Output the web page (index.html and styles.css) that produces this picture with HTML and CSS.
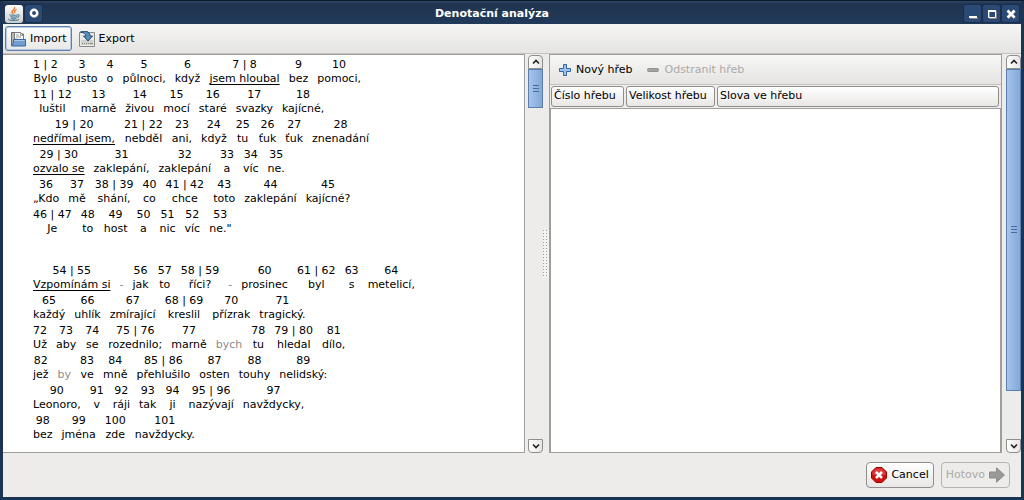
FILE: index.html
```html
<!DOCTYPE html>
<html lang="cs">
<head>
<meta charset="utf-8">
<title>Denotační analýza</title>
<link rel="stylesheet" href="styles.css">
</head>
<body>
<div class="window">
<header class="titlebar">
  <div class="title-group">
    <span class="java-icon"><svg width="18" height="18" viewBox="0 0 18 18"><path d="M9.500 2C11 4 7 5 7 7c0 1.200 1 1.500 1.500 2.500M11.500 4.500C9.500 5.500 9 6.500 10 8" fill="none" stroke="#e8762c" stroke-width="1.300"/><path d="M5 9.500c-2 1 7 1 7.500.2M5.500 11.500c1 .8 5 .8 6.500 0M6 13.200c1 .6 4 .6 5.500 0M12.500 10c2.500-.8 2 2-.5 2.500M4 14c-2 1.500 8 2 10 .3" fill="none" stroke="#5382a1" stroke-width="1.100"/></svg></span>
    <button class="win-btn" type="button" aria-label="Nabídka okna"><svg width="16" height="16" viewBox="0 0 16 16"><circle cx="8.500" cy="8.500" r="3.500" fill="none" stroke="#777" stroke-width="2"/><circle cx="8" cy="8" r="3.200" fill="none" stroke="#fff" stroke-width="2.400"/></svg></button>
  </div>
  <h1 class="title">Denotační analýza</h1>
  <div class="title-group end">
    <button class="win-btn" type="button" aria-label="Minimalizovat"><svg width="16" height="16" viewBox="0 0 16 16"><path d="M5 12.500h8" stroke="#888"/><path d="M4 11h8" stroke="#fff" stroke-width="2"/></svg></button>
    <button class="win-btn" type="button" aria-label="Maximalizovat"><svg width="16" height="16" viewBox="0 0 16 16"><path d="M5.500 5.500h7v7h-7z" fill="none" stroke="#888"/><path d="M4.500 5.500h7v6h-7z" fill="none" stroke="#fff"/><path d="M4 5h8" stroke="#fff" stroke-width="2"/></svg></button>
    <button class="win-btn" type="button" aria-label="Zavřít"><svg width="16" height="16" viewBox="0 0 16 16"><path d="M5 5l7 7M12 5l-7 7" stroke="#888" stroke-width="2.500"/><path d="M4.500 4.500l7 7M11.500 4.500l-7 7" stroke="#fff" stroke-width="2.500"/></svg></button>
  </div>
</header>
<div class="content">
<nav class="toolbar">
  <button class="tool active" type="button"><svg width="16" height="16" viewBox="0 0 16 16"><path d="M1.500 14.500v-13h5l1 1.500h6v10" fill="#b9bab6" stroke="#666861"/><path d="M4.500 8V1.500h6l3 3V9z" fill="#fff" stroke="#777973"/><path d="M10.500 1.500v3h3M6 4h3M6 6h5" fill="none" stroke="#999"/><path d="M3.500 8.500h12v6.500h-14l1.500-2z" fill="#729fcf" stroke="#3465a4"/><path d="M4.500 9.500h10" stroke="#a9c6e8"/></svg>Import</button>
  <button class="tool" type="button"><svg width="16" height="16" viewBox="0 0 16 16"><path d="M.5 1.500h15v14H.5z" fill="#e9e9e6" stroke="#888a85"/><path d="M2 9h12v5H2z" fill="#d0d1cd"/><path d="M3 12.500h1m1 0h1m1 0h1m1 0h1m1 0h3" stroke="#888a85"/><path d="M1.500 1C6-.5 11 0 11 5h2.500L9 10 4.500 5H7C7 3 5 1.500 1.500 1z" fill="#5b8fb8" stroke="#204a78"/></svg>Export</button>
</nav>
<main class="split">
  <section class="text-pane" aria-label="Text">
    <div class="stanza">
      <p class="row"><span class="w"><i>1 | 2</i>Bylo</span><span class="w"><i>3</i>pusto</span><span class="w"><i>4</i>o</span><span class="w"><i>5</i>půlnoci,</span><span class="w"><i>6</i>když</span><span class="w"><i>7 | 8</i><u>jsem hloubal</u></span><span class="w"><i>9</i>bez</span><span class="w"><i>10</i>pomoci,</span></p>
      <p class="row"><span class="w"><i>11 | 12</i>luštil</span><span class="w"><i>13</i>marně</span><span class="w"><i>14</i>živou</span><span class="w"><i>15</i>mocí</span><span class="w"><i>16</i>staré</span><span class="w"><i>17</i>svazky</span><span class="w"><i>18</i>kajícné,</span></p>
      <p class="row"><span class="w"><i>19 | 20</i><u>nedřímal jsem,</u></span><span class="w"><i>21 | 22</i>nebděl</span><span class="w"><i>23</i>ani,</span><span class="w"><i>24</i>když</span><span class="w"><i>25</i>tu</span><span class="w"><i>26</i>ťuk</span><span class="w"><i>27</i>ťuk</span><span class="w"><i>28</i>znenadání</span></p>
      <p class="row"><span class="w"><i>29 | 30</i><u>ozvalo se</u></span><span class="w"><i>31</i>zaklepání,</span><span class="w"><i>32</i>zaklepání</span><span class="w"><i>33</i>a</span><span class="w"><i>34</i>víc</span><span class="w"><i>35</i>ne.</span></p>
      <p class="row"><span class="w"><i>36</i>„Kdo</span><span class="w"><i>37</i>mě</span><span class="w"><i>38 | 39</i>shání,</span><span class="w"><i>40</i>co</span><span class="w"><i>41 | 42</i>chce</span><span class="w"><i>43</i>toto</span><span class="w"><i>44</i>zaklepání</span><span class="w"><i>45</i>kajícné?</span></p>
      <p class="row"><span class="w"><i>46 | 47</i>Je</span><span class="w"><i>48</i>to</span><span class="w"><i>49</i>host</span><span class="w"><i>50</i>a</span><span class="w"><i>51</i>nic</span><span class="w"><i>52</i>víc</span><span class="w"><i>53</i>ne."</span></p>
    </div>
    <div class="stanza">
      <p class="row"><span class="w"><i>54 | 55</i><u>Vzpomínám si</u></span><span class="w off">-</span><span class="w"><i>56</i>jak</span><span class="w"><i>57</i>to</span><span class="w"><i>58 | 59</i>říci?</span><span class="w off">-</span><span class="w"><i>60</i>prosinec</span><span class="w"><i>61 | 62</i>byl</span><span class="w"><i>63</i>s</span><span class="w"><i>64</i>metelicí,</span></p>
      <p class="row"><span class="w"><i>65</i>každý</span><span class="w"><i>66</i>uhlík</span><span class="w"><i>67</i>zmírající</span><span class="w"><i>68 | 69</i>kreslil</span><span class="w"><i>70</i>přízrak</span><span class="w"><i>71</i>tragický.</span></p>
      <p class="row"><span class="w"><i>72</i>Už</span><span class="w"><i>73</i>aby</span><span class="w"><i>74</i>se</span><span class="w"><i>75 | 76</i>rozednilo;</span><span class="w"><i>77</i>marně</span><span class="w off">bych</span><span class="w"><i>78</i>tu</span><span class="w"><i>79 | 80</i>hledal</span><span class="w"><i>81</i>dílo,</span></p>
      <p class="row"><span class="w"><i>82</i>jež</span><span class="w off">by</span><span class="w"><i>83</i>ve</span><span class="w"><i>84</i>mně</span><span class="w"><i>85 | 86</i>přehlušilo</span><span class="w"><i>87</i>osten</span><span class="w"><i>88</i>touhy</span><span class="w"><i>89</i>nelidský:</span></p>
      <p class="row"><span class="w"><i>90</i>Leonoro,</span><span class="w"><i>91</i>v</span><span class="w"><i>92</i>ráji</span><span class="w"><i>93</i>tak</span><span class="w"><i>94</i>ji</span><span class="w"><i>95 | 96</i>nazývají</span><span class="w"><i>97</i>navždycky,</span></p>
      <p class="row"><span class="w"><i>98</i>bez</span><span class="w"><i>99</i>jména</span><span class="w"><i>100</i>zde</span><span class="w"><i>101</i>navždycky.</span></p>
    </div>
  </section>
  <div class="scrollbar">
    <button class="arrow up" type="button" aria-label="Nahoru"><svg width="8" height="6" viewBox="0 0 8 6"><path d="M1 4.500l3-3 3 3" fill="none" stroke="#222" stroke-width="1.600"/></svg></button>
    <div class="track"><div class="thumb short"><span class="grip"></span></div></div>
    <button class="arrow down" type="button" aria-label="Dolů"><svg width="8" height="6" viewBox="0 0 8 6"><path d="M1 1.500l3 3 3-3" fill="none" stroke="#222" stroke-width="1.600"/></svg></button>
  </div>
  <div class="divider"><span class="dots"></span></div>
  <section class="spike-pane">
    <div class="spike-tools">
      <button class="tool" type="button"><svg width="14" height="14" viewBox="0 0 14 14"><path d="M5.500 1.500h3v4h4v3h-4v4h-3v-4h-4v-3h4z" fill="#9fc3e8" stroke="#3465a4"/></svg>Nový hřeb</button>
      <button class="tool" type="button" disabled><svg width="14" height="14" viewBox="0 0 14 14"><rect x="1.500" y="5.500" width="11" height="3" rx="1" fill="#a3a3a2" stroke="#929291"/></svg>Odstranit hřeb</button>
    </div>
    <table class="spikes">
      <thead><tr><th class="c1"><span>Číslo hřebu</span></th><th class="c2"><span>Velikost hřebu</span></th><th><span>Slova ve hřebu</span></th></tr></thead>
    </table>
    <div class="rows"></div>
  </section>
  <div class="scrollbar edge">
    <button class="arrow up" type="button" aria-label="Nahoru"><svg width="8" height="6" viewBox="0 0 8 6"><path d="M1 4.500l3-3 3 3" fill="none" stroke="#222" stroke-width="1.600"/></svg></button>
    <div class="track"><div class="thumb long"><span class="grip"></span></div></div>
    <button class="arrow down" type="button" aria-label="Dolů"><svg width="8" height="6" viewBox="0 0 8 6"><path d="M1 1.500l3 3 3-3" fill="none" stroke="#222" stroke-width="1.600"/></svg></button>
  </div>
</main>
<footer class="actions">
  <button class="push" type="button"><svg width="16" height="16" viewBox="0 0 16 16"><path d="M5 .5h6L15.500 5v6L11 15.500H5L.5 11V5z" fill="#cc1111" stroke="#a40000"/><path d="M5.300 1.500h5.400l3.800 3.800V8h-13V5.300z" fill="#e05050" opacity=".7"/><path d="M5 5l6 6M11 5l-6 6" stroke="#fff" stroke-width="2.500"/></svg>Cancel</button>
  <button class="push" type="button" disabled>Hotovo<svg width="16" height="16" viewBox="0 0 16 16"><path d="M.5 5h7V.8L15.500 8l-8 7.200V11h-7z" fill="#999998" stroke="#8d8d8c"/></svg></button>
</footer>
</div>
</div>
</body>
</html>
```
FILE: styles.css
```css
* { box-sizing: border-box; }
html, body { height: 100%; }
body { margin: 0; font: 11px/14px "DejaVu Sans", sans-serif; color: #000; }
button { font: inherit; color: inherit; margin: 0; padding: 0; border: 0; background: none; }
svg { display: block; flex: none; }

.window {
  display: flex; flex-direction: column; min-height: 100%;
  padding: 0 3px 3px;
  background: #1c3453;
  border-top: 1px solid #0d1828;
}
.titlebar {
  display: flex; align-items: center; height: 23px;
  background: linear-gradient(#2b4668, #20344f 3px, #213a5a);
  color: #fff;
}
.title-group { display: flex; flex: 1; gap: 2px; padding: 2px 2px 0; }
.title-group.end { justify-content: flex-end; }
.title { margin: 0; padding: 3px 40px 0 0; font: bold 11px/14px "DejaVu Sans", sans-serif; }
.java-icon { border-radius: 3px; background: linear-gradient(#fff, #ccc); }
.win-btn {
  display: flex; align-items: center; justify-content: center;
  width: 17px; height: 17px; border-radius: 2px;
  background: #2a4a75; box-shadow: 0 0 0 1px #1b2f4a;
}

.content { display: flex; flex-direction: column; flex: 1; background: #edecea; }
.toolbar {
  display: flex; gap: 2px; height: 30px; padding: 2px;
  background: linear-gradient(#f5f5f4, #e5e4e2);
  border-bottom: 1px solid #c4c2bf;
}
.tool { display: flex; align-items: center; gap: 4px; padding: 0 4px; border: 1px solid transparent; border-radius: 3px; }
.tool.active { border-color: #5c7fae; box-shadow: inset 0 0 0 1px #b6c9e2; background: linear-gradient(#fff, #e8e7e6); }
.tool:disabled { color: #acaaa8; }

.split {
  display: grid; flex: 1;
  grid-template-columns: minmax(0, 522fr) auto auto minmax(0, 453fr) auto;
}
.text-pane {
  padding: 3px 0 10px 30px;
  background: #fff; border: solid #a09e9b; border-width: 1px 1px 1px 0;
}
.stanza + .stanza { margin-top: 28px; }
.row { display: flex; gap: 9px; margin: 0 0 2px; }
.stanza .row:last-child { margin: 0; }
.w { display: flex; flex-direction: column; justify-content: flex-end; align-items: center; white-space: nowrap; }
.w i { font-style: normal; }
.w u { text-underline-offset: 2px; text-decoration-skip-ink: none; }
.off { color: #8c8c8c; }

.scrollbar { display: flex; flex-direction: column; width: 15px; margin: 1px 0 0 3px; }
.scrollbar.edge { margin-left: 4px; }
.arrow {
  display: flex; align-items: center; justify-content: center;
  height: 14px; border: 1px solid #908e8b; background: linear-gradient(90deg, #fff, #e6e5e3);
}
.arrow.up { border-radius: 4px 4px 0 0; }
.arrow.down { border-radius: 0 0 4px 4px; }
.track { flex: 1; }
.thumb {
  display: flex; align-items: center; justify-content: center;
  border: 1px solid #5b7fae; background: linear-gradient(90deg, #a6c4ea, #83a8d8);
}
.thumb.short { height: 39px; }
.thumb.long { height: 87%; }
.grip { width: 6px; height: 7px; background: repeating-linear-gradient(#476b9c 0 1px, transparent 1px 3px); }
.divider { display: flex; align-items: center; width: 6px; }
.dots {
  width: 6px; height: 48px;
  background:
    repeating-linear-gradient(90deg, transparent 0 1px, #f4f3f2 1px 3px),
    repeating-linear-gradient(#a09e9b 0 1px, #f4f3f2 1px 3px);
}

.spike-pane { display: flex; flex-direction: column; border: 1px solid #a09e9b; }
.spike-tools {
  display: flex; gap: 4px; height: 30px; padding: 0 3px;
  background: linear-gradient(#f7f7f6, #e5e4e2); border-bottom: 1px solid #c4c2bf;
}
.spike-tools .tool { padding: 0 4px; }
.spikes { width: 100%; table-layout: fixed; border-collapse: collapse; }
.spikes th { padding: 1px; font-weight: normal; text-align: left; }
.spikes th:last-child { padding-right: 2px; }
.c1 { width: 75px; }
.c2 { width: 91px; }
.spikes span {
  display: block; padding: 2px 2px 3px; white-space: nowrap;
  border: 1px solid #908e8b; border-radius: 3px; background: linear-gradient(#fff, #e8e7e5);
}
.rows { flex: 1; background: #fff; border: solid #a09e9b; border-width: 1px 1px 0; }

.actions { display: flex; justify-content: flex-end; gap: 7px; padding: 9px 11px; }
.push {
  display: flex; align-items: center; gap: 4px; height: 26px; padding: 0 4px;
  border: 1px solid #908e8b; border-radius: 4px; background: linear-gradient(#fff, #e8e7e5);
}
.push:disabled { color: #acaaa8; border-color: #b5b3b0; background: #edecea; }
```
